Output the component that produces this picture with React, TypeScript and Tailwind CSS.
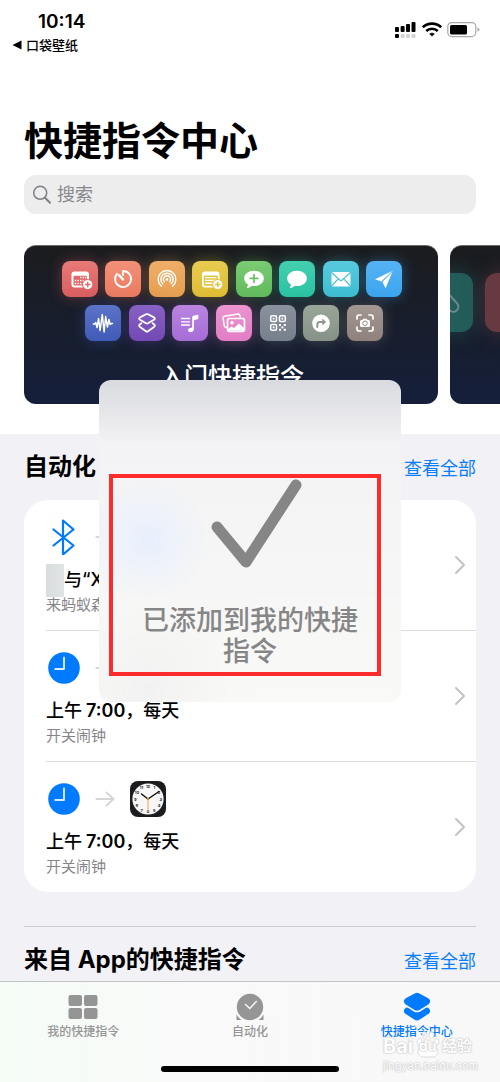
import clsx from "clsx";

const FONT = "font-['Inter','Noto_Sans_CJK_SC',sans-serif]";

type IconProps = { className?: string };

function CalendarAddIcon() {
  return (
    <svg viewBox="0 0 36 36" className="size-9">
      <rect x="9.5" y="10.5" width="17.5" height="16" rx="3" fill="#fff" />
      <rect x="11.5" y="14.8" width="13.5" height="9.8" rx="1" fill="#e06a6b" />
      <g fill="#fff">
        {[15.8, 18.8, 21.8].map((y) =>
          [12.8, 15.4, 18, 20.6, 23].map((x) =>
            y === 15.8 && x < 16 ? null : <rect key={`${x}-${y}`} x={x} y={y} width="1.4" height="1.4" />
          )
        )}
      </g>
      <circle cx="25.7" cy="23.5" r="5.6" fill="#e06a6b" />
      <circle cx="25.7" cy="23.5" r="4.6" fill="#fff" />
      <path d="M25.7 20.8v5.4M23 23.5h5.4" stroke="#e06a6b" strokeWidth="1.5" />
    </svg>
  );
}

function TimerIcon() {
  return (
    <svg viewBox="0 0 36 36" className="size-9" fill="none" stroke="#fff" strokeLinecap="round">
      <path d="M18 14v-4a8 8 0 1 1-6 2.8" strokeWidth="1.8" />
      <path d="M14 14.2l4 4.2" strokeWidth="2.4" />
    </svg>
  );
}

function AirDropIcon() {
  return (
    <svg viewBox="0 0 36 36" className="size-9" fill="none" stroke="#fff" strokeWidth="1.4" strokeLinecap="round">
      <path d="M12.5 25.2a8.8 8.8 0 1 1 11 0" />
      <path d="M13.8 22.8a6.1 6.1 0 1 1 8.4 0" />
      <path d="M15.4 20.7a3.5 3.5 0 1 1 5.2 0" />
      <circle cx="18" cy="18.4" r="1.3" fill="#fff" stroke="none" />
    </svg>
  );
}

function NoteAddIcon() {
  return (
    <svg viewBox="0 0 36 36" className="size-9">
      <rect x="10" y="10.5" width="17.5" height="16" rx="3" fill="#fff" />
      <rect x="11.8" y="14.6" width="14" height="10.2" rx="1" fill="#e3c445" />
      <path d="M13 16.6h11.2M13 19.4h11.2M13 22.2h8" stroke="#fff" strokeWidth="1.4" />
      <circle cx="25.7" cy="23.5" r="5.6" fill="#e2c23c" />
      <circle cx="25.7" cy="23.5" r="4.6" fill="#fff" />
      <path d="M25.7 20.8v5.4M23 23.5h5.4" stroke="#e2c23c" strokeWidth="1.5" />
    </svg>
  );
}

const BUBBLE =
  "M18 9.8c5.6 0 9.8 3.3 9.8 7.6s-4.2 7.6-9.6 7.6c-.8 0-1.5 0-2.2-.2-1.2 1.2-3 2-4.7 2.1-.5 0-.6-.4-.3-.8.6-.8 1-1.7 1-2.6C9.7 22.1 8.2 19.9 8.2 17.4c0-4.3 4.2-7.6 9.8-7.6z";

function MessageAddIcon() {
  return (
    <svg viewBox="0 0 36 36" className="size-9">
      <path d={BUBBLE} fill="#fff" />
      <path d="M18 13.6v7.6M14.2 17.4h7.6" stroke="#6cbf66" strokeWidth="1.7" strokeLinecap="round" />
    </svg>
  );
}

function MessageIcon() {
  return (
    <svg viewBox="0 0 36 36" className="size-9">
      <path d={BUBBLE} fill="#fff" />
    </svg>
  );
}

function MailIcon() {
  return (
    <svg viewBox="0 0 36 36" className="size-9">
      <rect x="8.5" y="11" width="19" height="14.5" rx="1.5" fill="#fff" />
      <path
        d="M8.5 11.5l8 7.3a2.2 2.2 0 0 0 3 0l8-7.3M8.5 25l6.700-7.2M27.500 25l-6.700-7.200"
        fill="none"
        stroke="#4cc2d8"
        strokeWidth="1.2"
      />
    </svg>
  );
}

function SendIcon() {
  return (
    <svg viewBox="0 0 36 36" className="size-9">
      <path d="M26.8 9.8L9 18.2l6.6 2.2z" fill="#fff" />
      <path d="M26.8 9.8L16.4 20.9l3.2 6.4z" fill="#fff" />
      <path d="M26.5 10.2L15.8 20.5" stroke="#4caef0" strokeWidth=".9" />
    </svg>
  );
}

function WaveIcon() {
  return (
    <svg viewBox="0 0 36 36" className="size-9" fill="none" stroke="#fff" strokeWidth="1.5" strokeLinecap="round" strokeLinejoin="round">
      <path d="M8.2 19h1.6l1-1.5 1.2 5 1.6-9 1.5 12 2.2-16 1.8 17.5 1.6-15.5 1.7 10.5 1.5-7.5 1.3 5 1-1h1.3" />
    </svg>
  );
}

function LayersIcon() {
  return (
    <svg viewBox="0 0 36 36" className="size-9" fill="none" stroke="#fff" strokeWidth="1.8" strokeLinejoin="round" strokeLinecap="round">
      <path d="M17 9.3q1-.5 2 0l6 3.1q1.8 1.1 0 2.300l-6 3.600q-1 .5-2 0l-6-3.600q-1.800-1.200 0-2.300z" />
      <path d="M12.400 18.300l-1.400 1q-1.800 1.300 0 2.600l6 4.300q1 .7 2 0l6-4.300q1.800-1.300 0-2.600l-1.400-1" />
    </svg>
  );
}

function MusicListIcon() {
  return (
    <svg viewBox="0 0 36 36" className="size-9">
      <path d="M9.5 13.5h8M9.5 16.8h8M9.5 20h8" stroke="#fff" strokeWidth="1.3" strokeLinecap="round" />
      <path
        d="M20.2 12.3c0-.8.4-1.3 1.2-1.5l4.2-1c.5-.1.8.1.8.6v3c0 .5-.3.8-.8.9l-3.7.9v8.8c0 2-1.5 3.2-3.4 3.2-1.5 0-2.5-.8-2.5-2.1 0-1.2.9-2 2.4-2.2l1.2-.2c.4-.1.6-.3.6-.7z"
        fill="#fff"
      />
    </svg>
  );
}

function PhotosIcon() {
  return (
    <svg viewBox="0 0 36 36" className="size-9">
      <path
        d="M11 22.5l-1.5-.3q-1-.3-1.2-1.3l-1.2-8q0-1.3 1.2-1.6l14-2.3q1.2 0 1.5 1.1l.5 2.5"
        fill="none"
        stroke="#fff"
        strokeWidth="1.5"
      />
      <rect x="11.5" y="13.5" width="17" height="12.8" rx="2" fill="none" stroke="#fff" strokeWidth="1.7" />
      <circle cx="16" cy="17.8" r="1.8" fill="#fff" />
      <path d="M12 25.5v-1.5l3.5-2.5 2.5 1.5 5-4.5 5 4.5v2.5z" fill="#fff" />
    </svg>
  );
}

function QrIcon() {
  return (
    <svg viewBox="0 0 36 36" className="size-9">
      <g fill="none" stroke="#fff" strokeWidth="1.5">
        <rect x="10.7" y="10.7" width="5.8" height="5.8" rx="1.2" />
        <rect x="19.5" y="10.7" width="5.8" height="5.8" rx="1.2" />
        <rect x="10.7" y="19.5" width="5.8" height="5.8" rx="1.2" />
      </g>
      <g fill="#fff">
        <rect x="12.7" y="12.7" width="1.8" height="1.8" />
        <rect x="21.5" y="12.7" width="1.8" height="1.8" />
        <rect x="12.7" y="21.5" width="1.8" height="1.8" />
        <rect x="19" y="19" width="2" height="2" />
        <rect x="23.8" y="19" width="2" height="2" />
        <rect x="21.4" y="21.4" width="2" height="2" />
        <rect x="19" y="23.8" width="2" height="2" />
        <rect x="23.8" y="23.8" width="2" height="2" />
      </g>
    </svg>
  );
}

function TurnRightIcon() {
  return (
    <svg viewBox="0 0 36 36" className="size-9">
      <circle cx="18" cy="18.2" r="8.8" fill="#fff" />
      <path d="M14.3 22v-2.5q0-2.5 2.5-2.5h3" fill="none" stroke="#8d998e" strokeWidth="2" strokeLinecap="round" />
      <path d="M19.3 13.4l4 3.6-4 3.6z" fill="#8d998e" />
    </svg>
  );
}

function CameraScanIcon() {
  return (
    <svg viewBox="0 0 36 36" className="size-9">
      <path
        d="M10 14v-2q0-2 2-2h2M22 10h2q2 0 2 2v2M26 22v2q0 2-2 2h-2M14 26h-2q-2 0-2-2v-2"
        fill="none"
        stroke="#fff"
        strokeWidth="1.7"
        strokeLinecap="round"
      />
      <path
        d="M14.5 15h1l.7-1.2h3.6l.7 1.2h1q1.500 0 1.500 1.500v4q0 1.500-1.500 1.500h-7q-1.500 0-1.500-1.500v-4q0-1.500 1.500-1.500z"
        fill="#fff"
      />
      <circle cx="18" cy="18.3" r="2.3" fill="none" stroke="#988c87" strokeWidth="1" />
    </svg>
  );
}

const topTiles = [
  { tone: "from-[#e77a78] to-[#d95d60] shadow-[#d95d60]/40", Icon: CalendarAddIcon },
  { tone: "from-[#f39078] to-[#ea7b60] shadow-[#ea7b60]/40", Icon: TimerIcon },
  { tone: "from-[#efae68] to-[#e59f50] shadow-[#e59f50]/40", Icon: AirDropIcon },
  { tone: "from-[#e8cb50] to-[#dfbd33] shadow-[#dfbd33]/40", Icon: NoteAddIcon },
  { tone: "from-[#7bcb74] to-[#61bb5b] shadow-[#61bb5b]/40", Icon: MessageAddIcon },
  { tone: "from-[#43cfb0] to-[#29c2a2] shadow-[#29c2a2]/40", Icon: MessageIcon },
  { tone: "from-[#58cbdc] to-[#3cbdd3] shadow-[#3cbdd3]/40", Icon: MailIcon },
  { tone: "from-[#55b3f5] to-[#3ba5ee] shadow-[#3ba5ee]/40", Icon: SendIcon },
];

const bottomTiles = [
  { tone: "from-[#5c73c8] to-[#405ab8] shadow-[#405ab8]/40", Icon: WaveIcon },
  { tone: "from-[#8861c4] to-[#7349b4] shadow-[#7349b4]/40", Icon: LayersIcon },
  { tone: "from-[#b984e0] to-[#a66dd6] shadow-[#a66dd6]/40", Icon: MusicListIcon },
  { tone: "from-[#ec94d0] to-[#e27dc6] shadow-[#e27dc6]/40", Icon: PhotosIcon },
  { tone: "from-[#8a929e] to-[#767f8c] shadow-[#767f8c]/40", Icon: QrIcon },
  { tone: "from-[#9ba69b] to-[#869287] shadow-[#869287]/40", Icon: TurnRightIcon },
  { tone: "from-[#a39792] to-[#8f827c] shadow-[#8f827c]/40", Icon: CameraScanIcon },
];

function TileRow({ tiles, className }: { tiles: typeof topTiles; className: string }) {
  return (
    <div className={clsx("flex justify-between", className)}>
      {tiles.map(({ tone, Icon }, i) => (
        <span key={i} className={clsx("size-9 rounded-lg bg-linear-to-b shadow-[0_0_14px]", tone)}>
          <Icon />
        </span>
      ))}
    </div>
  );
}

function StatusBar() {
  return (
    <div className="flex shrink-0 items-start justify-between pt-2.5 pr-5 pl-3">
      <div>
        <div className="pl-[26px] text-[19px] leading-6 font-semibold">10:14</div>
        <a href="#back" className="mt-px flex items-center gap-1 text-[13px] leading-5 font-medium">
          <svg viewBox="0 0 10 10" className="size-2.5">
            <path d="M.5 5L9.5.5v9z" />
          </svg>
          口袋壁纸
        </a>
      </div>
      <svg viewBox="0 0 86 18" className="mt-2.5 h-[18px] w-[86px]">
        <g>
          <rect x="1" y="7" width="4" height="5" rx="1" />
          <rect x="6.600" y="6" width="4" height="6" rx="1" />
          <rect x="12" y="4" width="4" height="8" rx="1" />
          <rect x="17.500" y="2" width="4" height="10" rx="1" />
          <rect x="1" y="14" width="4" height="4" rx="1" />
        </g>
        <g fill="#d4d4d4">
          <rect x="6.600" y="14" width="4" height="4" rx="1" />
          <rect x="12" y="14" width="4" height="4" rx="1" />
          <rect x="17.500" y="14" width="4" height="4" rx="1" />
        </g>
        <path d="M28.800 7.200a13.500 13.500 0 0 1 18.400 0M32.200 11a8.600 8.600 0 0 1 11.600 0" fill="none" stroke="#000" strokeWidth="2.600" />
        <path d="M38 16.500l-2.600-2.600a4 4 0 0 1 5.200 0z" />
        <rect x="53.800" y="2.600" width="28" height="14" rx="4" fill="none" stroke="#a9a9a9" strokeWidth="1.200" />
        <rect x="56" y="5" width="17" height="9.500" rx="1.500" />
        <path d="M83.500 7.500q2 .7 2 2.100t-2 2.100z" fill="#a9a9a9" />
      </svg>
    </div>
  );
}

function SearchBox() {
  return (
    <label className="mx-6 mt-2.5 flex h-[39px] shrink-0 items-center gap-[5px] rounded-xl bg-[#ededee] pl-2">
      <svg viewBox="0 0 20 20" className="size-5 shrink-0" fill="none" stroke="#7f7f84" strokeWidth="1.5" strokeLinecap="round">
        <circle cx="8.2" cy="7.8" r="6.5" />
        <path d="M13 12.7l5 5.1" strokeWidth="2" />
      </svg>
      <input
        type="search"
        placeholder="搜索"
        aria-label="搜索"
        className="min-w-0 flex-1 bg-transparent text-lg leading-6 outline-none placeholder:text-[#88888c]"
      />
    </label>
  );
}

function Banners() {
  const card =
    "h-[159px] shrink-0 overflow-hidden rounded-xl border-t border-[#6b6b6c] bg-linear-to-b from-[#1b1c1e] to-[#151f3b]";
  return (
    <div className="mt-[31px] flex shrink-0 gap-3 overflow-hidden pl-6">
      <a href="#starter" className={clsx(card, "flex w-[calc(100%-62px)] flex-col items-center gap-2 pt-[15px] pl-0.5")}>
        <TileRow tiles={topTiles} className="w-[341px]" />
        <TileRow tiles={bottomTiles} className="ml-1 w-[298px]" />
        <span className="mt-3 text-2xl leading-8 font-medium text-white">入门快捷指令</span>
      </a>
      <a href="#more" aria-label="更多" className={clsx(card, "flex w-[calc(100%-62px)] gap-3 pt-[27px]")}>
        <span className="-ml-9 size-[59px] shrink-0 rounded-xl bg-[#235d59] shadow-[0_0_20px] shadow-[#235d59]/60">
          <svg viewBox="0 0 59 59" className="size-full" fill="none" stroke="#6f8a8b" strokeWidth="2">
            <rect x="25" y="25" width="21" height="10" rx="5" transform="rotate(48 36 30)" />
          </svg>
        </span>
        <span className="size-[59px] shrink-0 rounded-xl bg-[#673a41] shadow-[0_0_20px] shadow-[#673a41]/60" />
      </a>
    </div>
  );
}

function SectionHeader({ title }: { title: string }) {
  return (
    <div className="flex items-center justify-between py-[15px]">
      <h2 className="text-2xl leading-9 font-bold">{title}</h2>
      <a href="#all" className="pt-1 text-lg leading-8 text-[#087dff]">
        查看全部
      </a>
    </div>
  );
}

function BluetoothIcon() {
  return (
    <svg
      viewBox="0 0 32 36"
      className="h-9 w-8"
      fill="none"
      stroke="#007aff"
      strokeWidth="2.200"
      strokeLinecap="round"
      strokeLinejoin="round"
    >
      <path d="M5.500 10.500L25.500 26.500 15 35.500V1.500L25.500 10.500 5.500 26.500" />
    </svg>
  );
}

function TimeIcon() {
  return (
    <svg viewBox="0 0 32 32" className="size-8">
      <circle cx="16" cy="16" r="15.8" fill="#007aff" />
      <path d="M16 5.5V17H7.2" fill="none" stroke="#d9ebff" strokeWidth="1.9" strokeLinecap="round" strokeLinejoin="round" />
    </svg>
  );
}

function ArrowIcon() {
  return (
    <svg
      viewBox="0 0 20 16"
      className="h-4 w-5"
      fill="none"
      stroke="#d6d6d8"
      strokeWidth="2"
      strokeLinecap="round"
      strokeLinejoin="round"
    >
      <path d="M1.5 8h17M11.5 1.5L18.5 8l-7 6.5" />
    </svg>
  );
}

function ClockAppIcon() {
  return (
    <svg viewBox="0 0 36 36" className="size-9">
      <rect width="36" height="36" rx="8" fill="#1c1c1e" />
      <circle cx="18" cy="18" r="15.6" fill="#f7f7f7" />
      <g fontSize="4" fontWeight="700" textAnchor="middle" fill="#222">
        {Array.from({ length: 12 }, (_, i) => {
          const a = ((i + 1) * Math.PI) / 6;
          return (
            <text key={i} x={18 + 12.8 * Math.sin(a)} y={19.5 - 12.8 * Math.cos(a)}>
              {i + 1}
            </text>
          );
        })}
      </g>
      <path d="M18 18l-6.5-5M18 18l11-7.5" stroke="#111" strokeWidth="1.5" strokeLinecap="round" />
      <path d="M18 16v15" stroke="#e9a94f" strokeWidth="1" />
      <circle cx="18" cy="18" r="1.2" fill="#c98a35" />
    </svg>
  );
}

type AutomationRowProps = {
  icon: React.ReactNode;
  app?: React.ReactNode;
  title: React.ReactNode;
  subtitle: string;
  last?: boolean;
};

function AutomationRow({ icon, app, title, subtitle, last }: AutomationRowProps) {
  return (
    <li>
      <a
        href="#automation"
        className={clsx("ml-[22px] flex items-center pr-2.5", !last && "border-b border-[#dedee0]")}
      >
        <div className="min-w-0 flex-1 pt-[19px] pb-[15px]">
          <div className="flex h-9 items-center gap-[15px] pl-0.5">
            {icon}
            <ArrowIcon />
            {app}
          </div>
          <div className="mt-[13px] flex h-6 items-center text-lg leading-6 font-medium whitespace-nowrap">{title}</div>
          <div className="mt-[3px] text-[15px] leading-5 text-[#858589]">{subtitle}</div>
        </div>
        <svg
          viewBox="0 0 12 20"
          className="h-5 w-3"
          fill="none"
          stroke="#c2c2c4"
          strokeWidth="2"
          strokeLinecap="round"
          strokeLinejoin="round"
        >
          <path d="M2 2l8 8-8 8" />
        </svg>
      </a>
    </li>
  );
}

function AlarmTitle() {
  return (
    <>
      上午<span className="ml-1 font-semibold">7:00</span>，每天
    </>
  );
}

function GridIcon({ className }: IconProps) {
  return (
    <svg viewBox="0 0 30 26" className={className} fill="currentColor">
      <rect x=".5" y="1" width="13.5" height="11" rx="2" />
      <rect x="16" y="1" width="13.5" height="11" rx="2" />
      <rect x=".5" y="14" width="13.5" height="11" rx="2" />
      <rect x="16" y="14" width="13.5" height="11" rx="2" />
    </svg>
  );
}

function AlarmIcon({ className }: IconProps) {
  return (
    <svg viewBox="0 0 30 28" className={className} fill="currentColor">
      <circle cx="15" cy="14" r="13.2" />
      <path d="M1.500 21.500q2 3.500 5 5.500h-5zM28.500 21.500q-2 3.500-5 5.500h5z" />
      <path d="M10.500 11.500l4.300 4 6.500-7" fill="none" stroke="#f8f8f8" strokeWidth="1.500" strokeLinecap="round" />
    </svg>
  );
}

function GalleryIcon({ className }: IconProps) {
  return (
    <svg viewBox="-1 0 32 31" className={className} fill="currentColor">
      <path d="M13 .9q2-1 4 0L26.500 6q3.500 2.300 2.200 4.800-.6 1.200-1.700 2l-9.500 5.800q-2.500 1.300-5 0L3 12.800q-1.100-.8-1.700-2Q0 8.300 3.500 6z" />
      <path d="M3.200 16.400q1.300-.6 2.600.2l5.700 3.600q3.500 1.900 7 0l5.700-3.600q1.300-.8 2.600-.2 3.500 2.600 1.400 5.400-.4.600-1.700 1.500l-9 5.900q-2.500 1.500-5 0l-9-5.900q-1.300-.9-1.700-1.500-2.100-2.800 1.400-5.400z" />
    </svg>
  );
}

const tabs = [
  { label: "我的快捷指令", Icon: GridIcon, active: false },
  { label: "自动化", Icon: AlarmIcon, active: false },
  { label: "快捷指令中心", Icon: GalleryIcon, active: true },
];

function TabBar() {
  return (
    <nav className="relative shrink-0 border-t border-[#c4c4c8] bg-linear-to-r from-[#f5fcf6] via-[#f9f9f9] via-40% to-[#f8f8f8]">
      <div className="grid grid-cols-3">
        {tabs.map(({ label, Icon, active }) => (
          <button
            key={label}
            type="button"
            className={clsx("flex flex-col items-center pt-2.5", active ? "text-[#007aff]" : "text-[#959595]")}
          >
            <Icon className="h-[30px] w-[30px]" />
            <span className="text-xs leading-5 font-medium">{label}</span>
          </button>
        ))}
      </div>
      <div className="mx-auto mt-6 mb-2.5 h-1.5 w-[178px] rounded-full bg-black" />
      <Watermark />
    </nav>
  );
}

function Watermark() {
  return (
    <div className="pointer-events-none absolute right-7 bottom-2 w-[89px] text-white [text-shadow:0_0_1px_#bbb,0_0_2px_#bbb]">
      <div className="flex items-center justify-between font-bold">
        <span className="text-xl leading-6">Bai</span>
        <span className="relative flex h-6 w-6 items-center justify-center">
          <svg viewBox="0 0 24 28" className="absolute bottom-0 h-7 w-6" fill="#fff" fillOpacity=".8" stroke="#d0d0d0" strokeWidth=".7">
            <ellipse cx="3.500" cy="12" rx="2.500" ry="3.500" />
            <ellipse cx="8.500" cy="5" rx="2.500" ry="3.500" />
            <ellipse cx="15.500" cy="5" rx="2.500" ry="3.500" />
            <ellipse cx="20.500" cy="12" rx="2.500" ry="3.500" />
            <path d="M12 10c4 0 5 4 8 7 4 5 1 10-3 10H7c-4 0-7-5-3-10 3-3 4-7 8-7z" />
          </svg>
          <span className="relative text-sm leading-6">du</span>
        </span>
        <span className="text-[15px] leading-6">经验</span>
      </div>
      <div className="text-[11px] leading-4 whitespace-nowrap">jingyan.baidu.com</div>
    </div>
  );
}

function Toast() {
  return (
    <div
      role="status"
      className="absolute inset-0 m-auto h-[322px] w-[302px] rounded-xl bg-linear-to-b from-[#d9dadf] via-[#f3f3f5] via-20% to-[#f9f9f7] px-2.5 pt-[94px]"
    >
      <div className="absolute inset-0 rounded-xl bg-[radial-gradient(circle_at_48px_160px,#e7effd,transparent_60px),radial-gradient(circle_at_50px_310px,#f1f1f1,transparent_80px)]" />
      <div className="relative flex h-[202px] w-[272px] flex-col items-center border-4 border-[#fd2b2b]">
        <svg
          viewBox="0 0 92 90"
          className="ml-[22px] h-[90px] w-[92px]"
          fill="none"
          stroke="#868686"
          strokeWidth="11"
          strokeLinecap="round"
          strokeLinejoin="round"
        >
          <path d="M7 49l29 35L86 7" />
        </svg>
        <p className="mt-[37px] ml-2.5 w-[220px] text-center text-[27px] leading-[31px] font-medium text-[#868686]">
          已添加到我的快捷指令
        </p>
      </div>
    </div>
  );
}

export default function App() {
  return (
    <div className={clsx(FONT, "relative flex h-screen flex-col overflow-hidden bg-white text-black")}>
      <main className="flex min-h-0 flex-1 flex-col overflow-hidden">
        <StatusBar />
        <h1 className="mt-[62px] shrink-0 px-6 text-[39px] leading-[48px] font-bold">快捷指令中心</h1>
        <SearchBox />
        <Banners />
        <div className="mt-[30px] flex-1 bg-[#f2f1f6] px-6">
          <SectionHeader title="自动化" />
          <ul className="rounded-3xl bg-white">
            <AutomationRow
              icon={<BluetoothIcon />}
              title={
                <>
                  <span className="-my-1 h-[33px] w-[18px] bg-linear-to-r from-[#d9dddd] to-[#e2e4e4]" />
                  与“X
                </>
              }
              subtitle="来蚂蚁森"
            />
            <AutomationRow icon={<TimeIcon />} title={<AlarmTitle />} subtitle="开关闹钟" />
            <AutomationRow icon={<TimeIcon />} app={<ClockAppIcon />} title={<AlarmTitle />} subtitle="开关闹钟" last />
          </ul>
          <div className="mt-[34px] border-t border-[#cfcfd3]">
            <SectionHeader title="来自 App的快捷指令" />
          </div>
        </div>
      </main>
      <TabBar />
      <Toast />
    </div>
  );
}
